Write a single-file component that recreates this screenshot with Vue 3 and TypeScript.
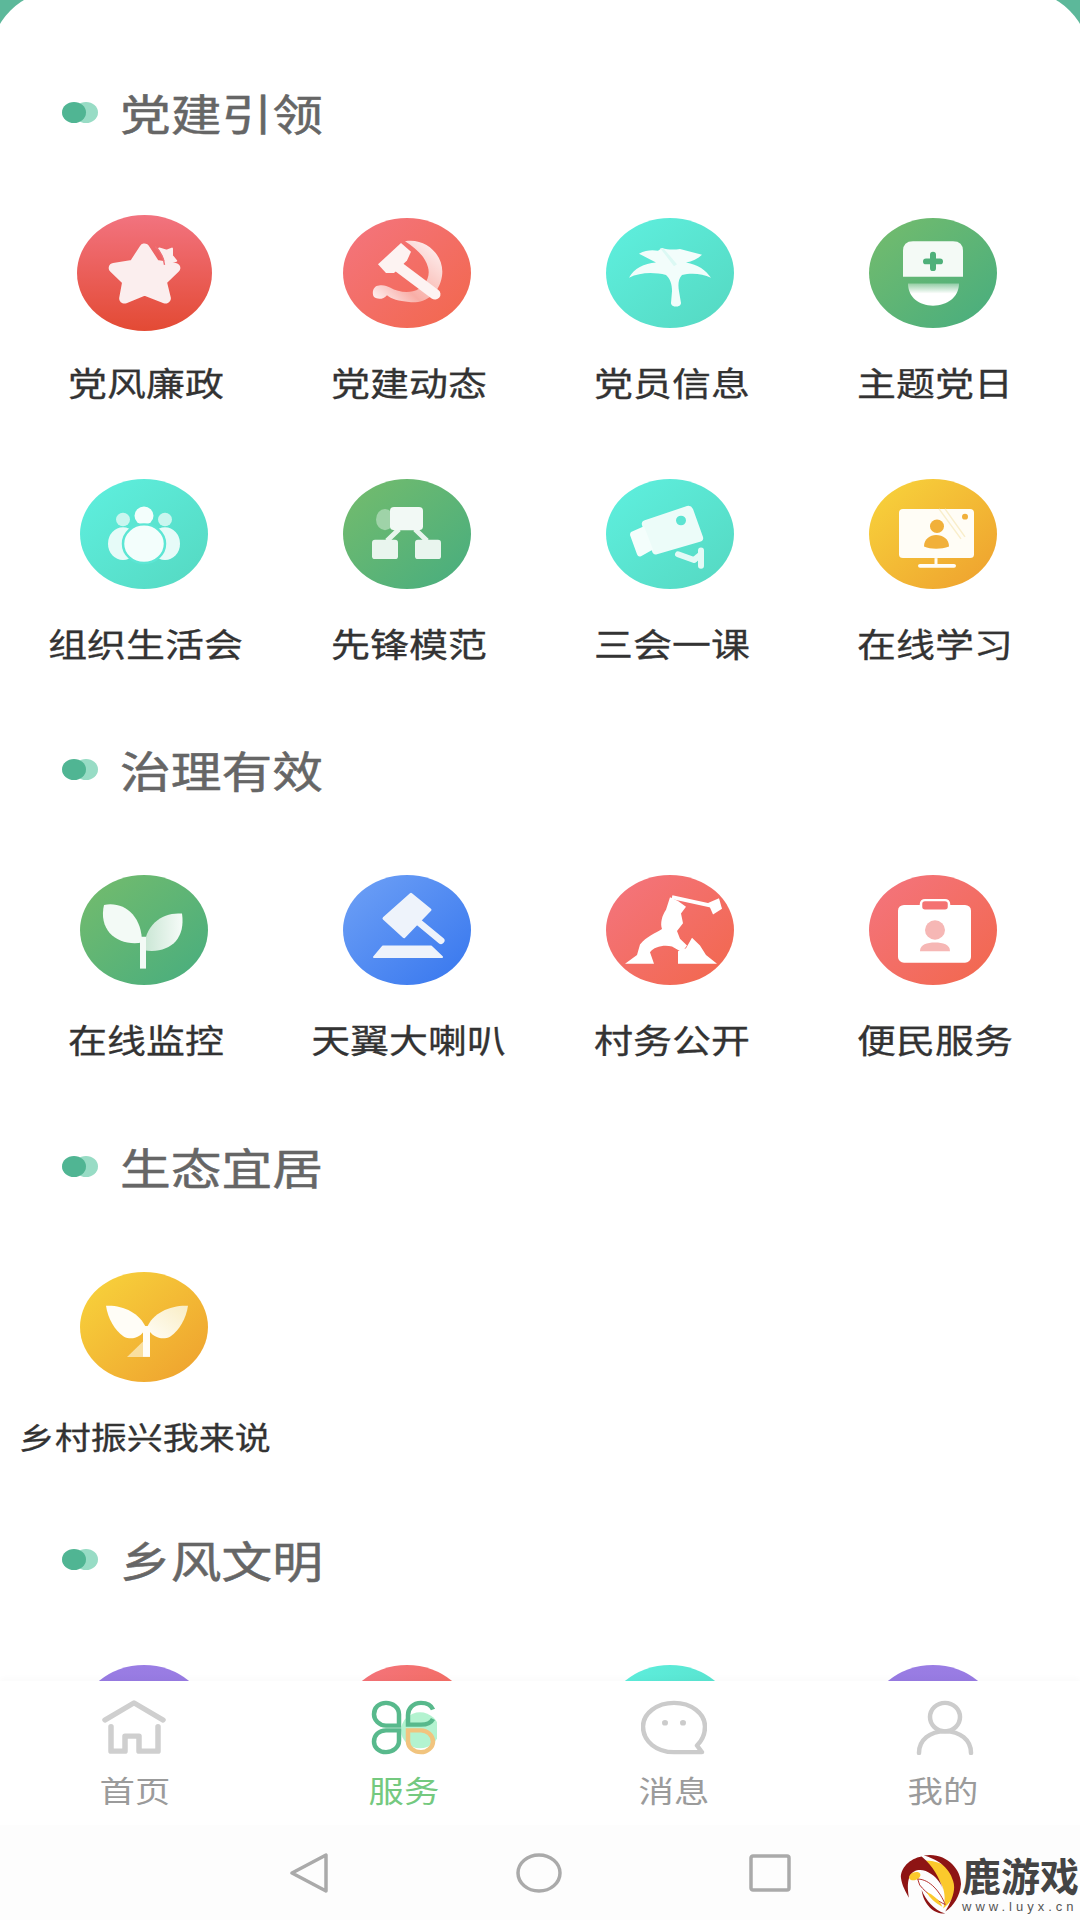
<script setup lang="ts">
interface Item {
  label: string
  tone: string
  icon: string
}

interface Section {
  title: string
  items: Item[]
}

const sections: Section[] = [
  {
    title: '党建引领',
    items: [
      { label: '党风廉政', tone: 'red', icon: 'star' },
      { label: '党建动态', tone: 'coral', icon: 'party' },
      { label: '党员信息', tone: 'teal', icon: 'palm' },
      { label: '主题党日', tone: 'green', icon: 'nurse' },
      { label: '组织生活会', tone: 'teal', icon: 'people' },
      { label: '先锋模范', tone: 'green', icon: 'org' },
      { label: '三会一课', tone: 'teal', icon: 'camera' },
      { label: '在线学习', tone: 'yellow', icon: 'screen' }
    ]
  },
  {
    title: '治理有效',
    items: [
      { label: '在线监控', tone: 'green', icon: 'sprout' },
      { label: '天翼大喇叭', tone: 'blue', icon: 'gavel' },
      { label: '村务公开', tone: 'coral', icon: 'hero' },
      { label: '便民服务', tone: 'coral', icon: 'badge' }
    ]
  },
  {
    title: '生态宜居',
    items: [{ label: '乡村振兴我来说', tone: 'yellow', icon: 'shoot' }]
  },
  {
    title: '乡风文明',
    items: [
      { label: '', tone: 'purple', icon: '' },
      { label: '', tone: 'coral', icon: '' },
      { label: '', tone: 'teal', icon: '' },
      { label: '', tone: 'purple', icon: '' }
    ]
  }
]

const tabs = [
  { label: '首页', icon: 'home' },
  { label: '服务', icon: 'service' },
  { label: '消息', icon: 'message' },
  { label: '我的', icon: 'me' }
]
</script>

<template>
  <div class="page">
    <svg class="defs" width="0" height="0" aria-hidden="true">
      <defs>
        <linearGradient id="red" x1="0" y1="0" x2="0" y2="1">
          <stop offset="0" stop-color="#f2737f" />
          <stop offset="1" stop-color="#e34a34" />
        </linearGradient>
        <linearGradient id="coral" x1="0" y1="0" x2="1" y2="1">
          <stop offset="0" stop-color="#f4757f" />
          <stop offset="1" stop-color="#f2674c" />
        </linearGradient>
        <linearGradient id="teal" x1="0" y1="0" x2="1" y2="1">
          <stop offset="0" stop-color="#5ef0df" />
          <stop offset="1" stop-color="#55d8c1" />
        </linearGradient>
        <linearGradient id="green" x1="0" y1="0" x2="1" y2="1">
          <stop offset="0" stop-color="#75bc6c" />
          <stop offset="1" stop-color="#47ad7f" />
        </linearGradient>
        <linearGradient id="yellow" x1="0" y1="0" x2="1" y2="1">
          <stop offset="0" stop-color="#f8d53c" />
          <stop offset="1" stop-color="#ee9f2e" />
        </linearGradient>
        <linearGradient id="blue" x1="0" y1="0" x2="1" y2="1">
          <stop offset="0" stop-color="#6fa1f6" />
          <stop offset="1" stop-color="#3676ee" />
        </linearGradient>
        <linearGradient id="purple" x1="0" y1="0" x2="0" y2="1">
          <stop offset="0" stop-color="#9a7de4" />
          <stop offset="1" stop-color="#8a6fd8" />
        </linearGradient>
        <linearGradient id="sickle" x1="0" y1="1" x2="1" y2="0">
          <stop offset="0" stop-color="#fff" stop-opacity="0.95" />
          <stop offset="0.35" stop-color="#fff" stop-opacity="0.45" />
          <stop offset="1" stop-color="#fff" stop-opacity="0.95" />
        </linearGradient>
        <linearGradient id="fadeDown" x1="0" y1="0" x2="0" y2="1">
          <stop offset="0" stop-color="#fff" stop-opacity="0.35" />
          <stop offset="0.45" stop-color="#fff" />
        </linearGradient>
        <linearGradient id="leaf" x1="0" y1="0" x2="1" y2="0">
          <stop offset="0" stop-color="#c9e6d4" />
          <stop offset="1" stop-color="#f6fbf8" />
        </linearGradient>
        <linearGradient id="goldLeaf" x1="0" y1="1" x2="1" y2="0">
          <stop offset="0" stop-color="#fffdf6" />
          <stop offset="1" stop-color="#f9edc4" />
        </linearGradient>
      </defs>
    </svg>

    <main class="content">
      <section v-for="section in sections" :key="section.title" class="section">
        <h2 class="section-title">
          <svg class="dots" width="36" height="21" viewBox="0 0 36 21">
            <ellipse cx="24" cy="10.5" rx="12" ry="10.5" fill="#98dcc5" />
            <ellipse cx="12" cy="10.5" rx="12" ry="10.5" fill="#50b593" />
          </svg>
          <span>{{ section.title }}</span>
        </h2>

        <div class="grid">
          <div v-for="(item, i) in section.items" :key="i" class="cell">
            <svg
              class="icon"
              :class="{ large: item.icon === 'star' }"
              viewBox="0 0 128 114"
              preserveAspectRatio="none"
            >
              <ellipse cx="64" cy="57" rx="64" ry="57" :fill="`url(#${item.tone})`" />

              <g v-if="item.icon === 'star'">
                <path
                  d="M64 33 74 49 93 52 80 65 84 82 64 74 45 82 48 65 35 52 54 49Z"
                  fill="#fbeeee"
                  stroke="#fbeeee"
                  stroke-width="10"
                  stroke-linejoin="round"
                />
                <path
                  d="M78 33 85 35 90 33 90 40 94 45 85 48C83 42 81 37 78 33Z"
                  fill="#fbeeee"
                  stroke="#fbeeee"
                  stroke-width="2"
                  stroke-linejoin="round"
                />
                <path d="M74 31C79 35 82 41 83 49" fill="none" stroke="#ee7077" stroke-width="1.3" />
              </g>

              <g v-else-if="item.icon === 'party'">
                <path
                  d="M62 24C84 20 102 40 99 60 96 80 81 89 66 87 56 86 48 84 44 80 41 84 35 85 31 82 28 77 31 70 36 70 41 69 44 71 47 72 54 76 62 78 70 76 81 73 88 62 85 51 82 40 74 32 62 24Z"
                  fill="url(#sickle)"
                />
                <path d="M35 48 58 26 68 35 64 44 51 57 43 57Z" fill="#fdf3f2" />
                <path d="M52 48 92 79" stroke="#fdf3f2" stroke-width="11" stroke-linecap="round" />
              </g>

              <g v-else-if="item.icon === 'palm'">
                <path
                  d="M23 62C28 52 38 47 50 46L33 37C40 33 47 33 52 34L56 31C62 33 68 33 74 32L96 38C92 42 86 45 80 46 92 48 100 54 105 62 96 57 84 57 76 59 72 63 72 70 73 76L75 88C75 93 65 93 65 88L66 76C66 68 64 63 60 59 48 56 34 56 23 62Z"
                  fill="#f2fdfb"
                />
                <path d="M54 31 68 50 71 48 58 32Z" fill="#dcf9f4" />
              </g>

              <g v-else-if="item.icon === 'nurse'">
                <path d="M34 34Q34 24 44 24H84Q94 24 94 34V61H34Z" fill="#f4faf6" />
                <path d="M64 38V52M57 45H71" stroke="#4fb07a" stroke-width="6" stroke-linecap="round" />
                <path d="M39 68H90C90 82 78 91 64 91 50 91 39 82 39 68Z" fill="url(#fadeDown)" />
              </g>

              <g v-else-if="item.icon === 'people'">
                <circle cx="43" cy="42" r="7" fill="#c9f6ef" />
                <circle cx="85" cy="42" r="7" fill="#c9f6ef" />
                <ellipse cx="43" cy="67" rx="15" ry="17" fill="#e6fbf8" />
                <ellipse cx="85" cy="67" rx="15" ry="17" fill="#e6fbf8" />
                <circle cx="64" cy="38" r="9.5" fill="#f3fefc" />
                <ellipse cx="64" cy="67" rx="21" ry="20" fill="#f3fefc" stroke="#5ce6d4" stroke-width="2.5" />
              </g>

              <g v-else-if="item.icon === 'org'">
                <ellipse cx="42" cy="42" rx="9" ry="11" fill="#9fd3a8" />
                <path d="M56 52 44 64M72 52 84 64" stroke="#e7f5ec" stroke-width="5" />
                <rect x="47" y="29" width="33" height="24" rx="4" fill="#f2f9f5" />
                <rect x="29" y="63" width="26" height="20" rx="3" fill="#e9f5ee" />
                <rect x="72" y="63" width="26" height="20" rx="3" fill="#e9f5ee" />
              </g>

              <g v-else-if="item.icon === 'camera'">
                <path d="M38 43 81 28Q85 27 87 31L97 60Q98 64 94 65L51 78Q47 79 46 75L36 48Q35 44 38 43Z" fill="#ecfcf9" />
                <path d="M25 55 38 49 47 73 35 80Q32 81 31 78L24 58Q24 56 25 55Z" fill="#f4fefc" />
                <circle cx="75" cy="43" r="5" fill="#5ce4d2" />
                <path d="M72 78 88 84M95 74V90" stroke="#e3faf6" stroke-width="6" stroke-linecap="round" />
                <path d="M88 84 95 78" stroke="#e3faf6" stroke-width="6" />
              </g>

              <g v-else-if="item.icon === 'screen'">
                <rect x="30" y="31" width="75" height="51" rx="4" fill="#fffdf6" />
                <path d="M70 31 92 62M76 31 96 60" stroke="#f9eecb" stroke-width="1.5" />
                <circle cx="96" cy="39" r="3" fill="#f1b03a" />
                <circle cx="68" cy="49" r="7" fill="#f1b03a" />
                <path d="M55 70C55 62 61 58 67 58 74 58 80 62 80 70 72 73 62 73 55 70Z" fill="#f1b03a" />
                <path d="M67 82V89" stroke="#fffdf6" stroke-width="3" />
                <rect x="49" y="88" width="38" height="4" rx="2" fill="#fffdf6" />
              </g>

              <g v-else-if="item.icon === 'sprout'">
                <path d="M24 31C44 27 62 42 62 70 38 74 18 58 24 31Z" fill="#f3faf6" />
                <path d="M102 40C84 38 64 50 64 78 88 82 106 68 102 40Z" fill="url(#leaf)" />
                <rect x="60" y="64" width="6" height="33" fill="#f3faf6" />
              </g>

              <g v-else-if="item.icon === 'gavel'">
                <path d="M68 20 87 36 61 64 41 45Z" fill="#eef3fb" stroke="#eef3fb" stroke-width="3" stroke-linejoin="round" />
                <path d="M70 44 98 68" stroke="#eef3fb" stroke-width="7" stroke-linecap="round" />
                <path d="M40 74H88L99 85H31Z" fill="#eef3fb" stroke="#eef3fb" stroke-width="2" stroke-linejoin="round" />
              </g>

              <g v-else-if="item.icon === 'hero'">
                <path d="M66 23 106 32" stroke="#fff" stroke-width="4" />
                <path d="M102 29 113 24 116 35 107 41Z" fill="#fff" />
                <path
                  d="M64 23 72 27 80 33 75 40 77 50 71 58 74 66 81 73 76 80 66 74C58 72 48 74 44 80L48 92H19L31 83 34 72C40 64 50 60 56 56 54 50 56 42 60 36Z"
                  fill="#fff"
                />
                <path d="M72 92V79L80 76 86 65 94 73 100 83 111 92Z" fill="#fff" />
              </g>

              <g v-else-if="item.icon === 'badge'">
                <rect x="29" y="31" width="73" height="60" rx="6" fill="#fff" />
                <rect x="52" y="26" width="28" height="11" rx="4" fill="#f47272" stroke="#fff" stroke-width="2.5" />
                <circle cx="66" cy="57" r="10" fill="#f6b7b5" />
                <path d="M51 79C51 72 58 70 66 70 74 70 81 72 81 79Z" fill="#f6b7b5" />
              </g>

              <g v-else-if="item.icon === 'shoot'">
                <path d="M26 35C42 34 60 42 66 58 60 70 50 70 44 67 34 60 28 48 26 35Z" fill="#fffdf7" />
                <path d="M108 35C92 34 72 42 67 58 74 70 84 70 90 67 100 60 106 48 108 35Z" fill="url(#goldLeaf)" />
                <path d="M63 56H70V88H63Z" fill="#fffdf7" />
                <path d="M47 88 63 72V88Z" fill="#fbeec6" opacity="0.75" />
              </g>
            </svg>
            <span v-if="item.label" class="label" :class="{ small: item.label.length > 5 }">{{ item.label }}</span>
          </div>
        </div>
      </section>
    </main>

    <nav class="tabbar">
      <div v-for="tab in tabs" :key="tab.icon" class="tab" :class="{ active: tab.icon === 'service' }">
        <svg class="tab-icon" width="66" height="55" viewBox="0 0 66 58" preserveAspectRatio="none">
          <g v-if="tab.icon === 'home'" fill="none" stroke="#cfcfcf" stroke-width="5.5" stroke-linejoin="round" stroke-linecap="round">
            <path d="M3 21 32 3 61 21" />
            <path d="M9 28V54H23V38H37V54H56V28" />
          </g>
          <g v-else-if="tab.icon === 'service'" fill="none" stroke-width="4.5">
            <circle cx="49" cy="32" r="19" fill="#b3f3d0" />
            <path d="M15 3C8 3 3 8 3 15 3 21 8 27 15 27H28V15C28 8 22 3 15 3Z" stroke="#58b98c" />
            <path d="M62 10C60 5 56 3 50 3 42 3 37 9 37 16V26H50C56 26 60 24 62 20" stroke="#58b98c" />
            <path d="M15 32C8 32 3 37 3 44 3 50 8 55 15 55 22 55 28 50 28 43V32Z" stroke="#58b98c" />
            <path d="M37 32V44C37 50 43 55 50 55 56 55 62 50 62 44 62 37 56 32 50 32Z" stroke="#f1c47e" />
          </g>
          <g v-else-if="tab.icon === 'message'" fill="none" stroke="#cbcbcb" stroke-width="4.5" stroke-linejoin="round">
            <path d="M33 3C16 3 2 14 2 28 2 44 16 55 33 55H61L56 48C61 43 64 36 64 28 64 14 50 3 33 3Z" />
            <circle cx="24" cy="24" r="3" fill="#cbcbcb" stroke="none" />
            <circle cx="42" cy="24" r="3" fill="#cbcbcb" stroke="none" />
          </g>
          <g v-else fill="none" stroke="#cccccc" stroke-width="4.5" stroke-linecap="round">
            <circle cx="35" cy="18" r="15" />
            <path d="M9 56C9 42 20 33 35 33 50 33 61 42 61 56" />
          </g>
        </svg>
        <span class="tab-label">{{ tab.label }}</span>
      </div>
    </nav>

    <footer class="system-bar">
      <svg width="40" height="40" viewBox="0 0 40 40">
        <path d="M3 20 37 2V38Z" fill="none" stroke="#aaa" stroke-width="3.5" stroke-linejoin="round" />
      </svg>
      <svg width="46" height="40" viewBox="0 0 46 40" preserveAspectRatio="none">
        <ellipse cx="23" cy="20" rx="21" ry="18" fill="none" stroke="#aaa" stroke-width="3.5" />
      </svg>
      <svg width="42" height="38" viewBox="0 0 42 38">
        <rect x="2" y="2" width="38" height="34" rx="2" fill="none" stroke="#aaa" stroke-width="3.5" />
      </svg>

      <div class="watermark">
        <svg width="62" height="60" viewBox="0 0 63 60">
          <path d="M26 6C44 6 57 18 57 30 57 42 50 50 44 55 48 40 44 24 26 14Z" fill="#fbc92c" />
          <path d="M24 1C46-3 62 14 62 30 61 42 55 52 46 58 53 46 57 36 54 27 50 12 36 4 24 1Z" fill="#8e1414" />
          <path d="M22 2C10 4 0 14 1 24 2 32 6 38 9 44 8 36 7 28 10 22 14 14 24 14 32 20 38 24 42 30 44 36 40 24 34 12 22 2Z" fill="#8e1414" />
          <ellipse cx="15" cy="22" rx="6" ry="4" fill="#fbc92c" transform="rotate(-20 15 22)" />
          <path d="M18 25C30 25 41 38 46 51 38 47 27 40 20 31Z" fill="#fff" stroke="#b5302c" stroke-width="1" />
          <path d="M22 36C26 46 34 56 46 60 36 61 24 52 22 36Z" fill="#8e1414" />
          <path d="M27 38C30 44 36 50 43 53 40 46 33 41 27 38Z" fill="#fbc92c" />
        </svg>
        <div class="watermark-text">
          <strong>鹿游戏</strong>
          <small>www.luyx.cn</small>
        </div>
      </div>
    </footer>
  </div>
</template>

<style scoped>
.page {
  position: relative;
  width: 1080px;
  height: 1920px;
  display: flex;
  flex-direction: column;
  overflow: hidden;
  background: #5cb89a;
  font-family: "Noto Sans CJK SC", "Noto Sans", sans-serif;
}

.defs {
  position: absolute;
}

/* the card is a bit wider than the screen, so only the flat part of its corner arc shows */
.content {
  flex: 1;
  min-height: 0;
  overflow: hidden;
  margin: -10px -10px 0;
  padding: 92px 10px 0;
  background: #fff;
  border-radius: 70px 70px 0 0;
}

.section {
  padding-bottom: 72px;
}

.section:nth-child(2) {
  padding-bottom: 73px;
}

.section:nth-child(3) {
  padding-bottom: 69px;
}

.section-title {
  display: flex;
  align-items: center;
  height: 60px;
  margin: 0;
  padding-left: 62px;
  font-size: 43px;
  font-weight: 400;
  color: #666;
  -webkit-text-stroke: 0.5px #666;
}

.section-title span {
  margin-left: 22px;
  transform: scaleX(1.18);
  transform-origin: left center;
}

.dots {
  flex: none;
}

.grid {
  display: grid;
  grid-template-columns: repeat(4, 263px);
  row-gap: 73px;
  margin-top: 76px;
  padding-left: 12.5px;
}

.cell {
  display: flex;
  flex-direction: column;
  align-items: center;
}

.icon {
  display: block;
  width: 128px;
  height: 110px;
}

.icon.large {
  width: 135px;
  height: 116px;
  margin: -3px 0;
}

.label {
  margin: 30px 0 0 3px;
  height: 48px;
  line-height: 48px;
  font-size: 33px;
  color: #333;
  -webkit-text-stroke: 0.3px #333;
  white-space: nowrap;
  transform: scaleX(1.18);
}

.label.small {
  margin-left: 2px;
  font-size: 30.5px;
}

.tabbar {
  flex: none;
  display: flex;
  height: 144px;
  padding: 19px 2px 0 0;
  box-sizing: border-box;
  background: #fff;
  box-shadow: 0 -3px 6px rgba(0, 0, 0, 0.02);
}

.tab {
  flex: 1;
  display: flex;
  flex-direction: column;
  align-items: center;
}

.tab-label {
  margin-top: 14px;
  height: 40px;
  line-height: 40px;
  font-size: 30px;
  color: #9b9b9b;
  transform: scaleX(1.18);
}

.tab.active .tab-label {
  color: #74c97f;
}

.system-bar {
  flex: none;
  display: flex;
  align-items: center;
  justify-content: center;
  gap: 187px;
  height: 95px;
  background: #fdfdfd;
}

.watermark {
  position: absolute;
  left: 900px;
  bottom: 6px;
  display: flex;
  align-items: center;
  white-space: nowrap;
}

.watermark-text {
  display: flex;
  flex-direction: column;
  width: 118px;
}

.watermark-text strong {
  height: 40px;
  font-size: 39px;
  line-height: 40px;
  font-weight: 700;
  color: #444;
}

.watermark-text small {
  margin-top: 5px;
  font-family: "Liberation Sans", sans-serif;
  font-size: 13px;
  line-height: 15px;
  letter-spacing: 4px;
  color: #555;
}
</style>

<style>
html,
body {
  background: #fff;
}
</style>
